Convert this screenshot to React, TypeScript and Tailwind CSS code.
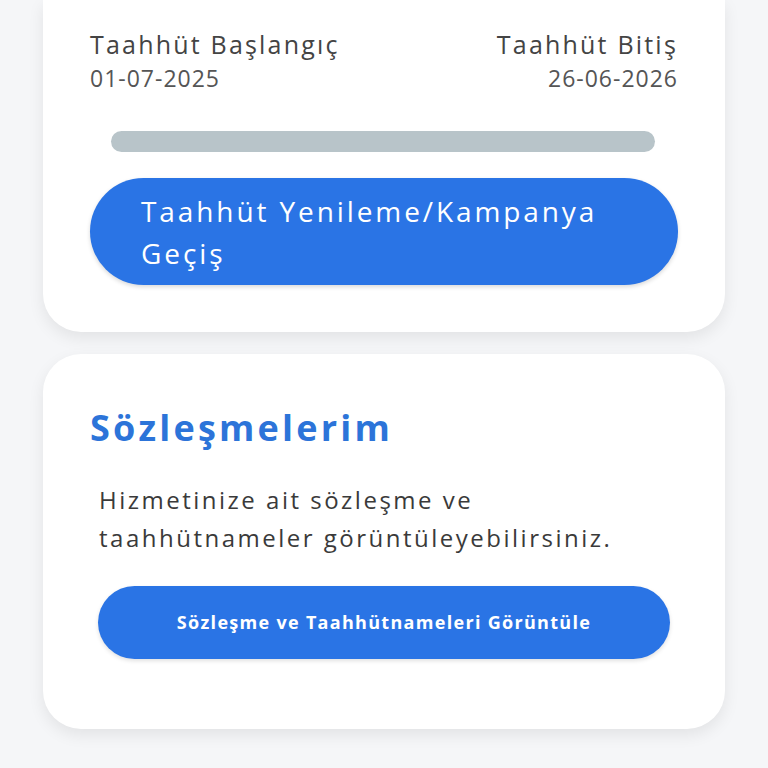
import React from 'react';

const font = { fontFamily: '"Open Sans", "Liberation Sans", sans-serif' };

const App: React.FC = () => {
  return (
    <div className="min-h-[768px] w-[768px] bg-[#f5f6f8] overflow-hidden" style={font}>
      {/* Taahhüt kartı (üstü ekran dışında) */}
      <div className="mx-[43px] bg-white rounded-b-[38px] shadow-[0_6px_16px_rgba(0,0,0,0.08)] px-[47px] pt-[28px] pb-[47px]">
        <div className="flex justify-between text-[#444]">
          <div>
            <div className="text-[25px] leading-[32px] tracking-[2.2px]">Taahhüt Başlangıç</div>
            <div className="text-[23px] leading-[36px] tracking-[1px] text-[#555]">01-07-2025</div>
          </div>
          <div className="text-right">
            <div className="text-[25px] leading-[32px] tracking-[2.2px]">Taahhüt Bitiş</div>
            <div className="text-[23px] leading-[36px] tracking-[1px] text-[#555]">26-06-2026</div>
          </div>
        </div>

        <div className="mt-[35px] ml-[21px] mr-[23px] h-[21px] rounded-full bg-[#b8c4c9]" />

        <button className="mt-[26px] w-full h-[107px] rounded-full bg-[#2a74e5] text-white text-left pl-[51px] pr-[60px] shadow-[0_2px_4px_rgba(0,0,0,0.15)]">
          <span className="block text-[28px] leading-[42px] tracking-[2.9px]">Taahhüt Yenileme/Kampanya Geçiş</span>
        </button>
      </div>

      {/* Sözleşmelerim */}
      <div className="mx-[43px] mt-[22px] bg-white rounded-[38px] shadow-[0_6px_16px_rgba(0,0,0,0.08)] px-[47px] pt-[52px] pb-[70px]">
        <h2 className="text-[36px] leading-[44px] font-bold tracking-[3.2px] text-[#2c74d9]">Sözleşmelerim</h2>
        <p className="mt-[31px] ml-[9px] text-[24px] leading-[38px] text-[#3a3a3a] tracking-[2.5px] pr-[40px]">
          Hizmetinize ait sözleşme ve taahhütnameler görüntüleyebilirsiniz.
        </p>
        <button className="mt-[29px] ml-[8px] w-[572px] h-[73px] rounded-full bg-[#2a74e5] text-white text-[18px] font-bold tracking-[1.3px] flex items-center justify-center shadow-[0_2px_4px_rgba(0,0,0,0.12)]">
          Sözleşme ve Taahhütnameleri Görüntüle
        </button>
      </div>
    </div>
  );
};

export default App;
